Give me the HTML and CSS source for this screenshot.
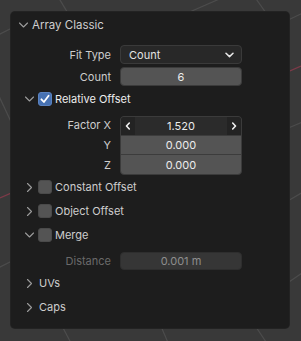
FILE: index.html
```html
<!DOCTYPE html>
<html>
<head>
<meta charset="utf-8">
<link rel="stylesheet" href="styles.css">
</head>
<body>
<svg class="viewport" width="301" height="341" viewBox="0 0 301 341">
  <g class="grid">
    <line x1="57" y1="-5" x2="75" y2="25"/>
    <line x1="185" y1="14" x2="240" y2="-10"/>
    <line x1="254" y1="-4" x2="271" y2="20"/>
    <line x1="284" y1="22" x2="305" y2="12"/>
    <line x1="-2" y1="35" x2="14" y2="27"/>
    <line x1="-2" y1="94" x2="13" y2="126"/>
    <line x1="286" y1="129" x2="305" y2="121"/>
    <line x1="286" y1="202" x2="305" y2="191"/>
    <line x1="286" y1="284" x2="305" y2="271"/>
    <line x1="-2" y1="268" x2="14" y2="260"/>
    <line x1="61" y1="324" x2="72" y2="345"/>
    <line x1="160" y1="324" x2="169" y2="345"/>
    <line x1="254" y1="324" x2="268" y2="345"/>
  </g>
  <line class="xaxis" x1="0" y1="198" x2="301" y2="66"/>
</svg>

<div class="panel">
  <div class="panel-header">
    <svg class="chev-down" width="11" height="8" viewBox="0 0 11 8"><polyline points="1.5,2 5.5,6 9.5,2"/></svg>
    <span class="title">Array Classic</span>
  </div>

  <div class="prop first">
    <span class="lbl">Fit Type</span>
    <div class="dropdown">
      <span>Count</span>
      <svg class="dd-arrow" width="9" height="6" viewBox="0 0 9 6"><polyline points="1,1.2 4.5,4.6 8,1.2"/></svg>
    </div>
  </div>

  <div class="prop">
    <span class="lbl">Count</span>
    <div class="num">6</div>
  </div>

  <div class="sub rel">
    <span class="chev-slot"><svg class="chev-down" width="11" height="8" viewBox="0 0 11 8"><polyline points="1.5,2 5.5,6 9.5,2"/></svg></span>
    <span class="check on"><svg width="14" height="14" viewBox="0 0 14 14"><polyline points="3.4,7.3 5.9,10 10.6,3.8"/></svg></span>
    <span class="sub-title bright">Relative Offset</span>
  </div>

  <div class="vec">
    <div class="vlabels">
      <span class="vl x">Factor X</span>
      <span class="vl">Y</span>
      <span class="vl">Z</span>
    </div>
    <div class="vgroup">
      <div class="vrow xrow">
        <span class="arr"><svg width="6" height="8" viewBox="0 0 6 8"><polyline points="4.3,1 1.5,4 4.3,7"/></svg></span>
        <span class="val">1.520</span>
        <span class="arr"><svg width="6" height="8" viewBox="0 0 6 8"><polyline points="1.7,1 4.5,4 1.7,7"/></svg></span>
      </div>
      <div class="vrow light"><span class="val">0.000</span></div>
      <div class="vrow light"><span class="val">0.000</span></div>
    </div>
  </div>

  <div class="sub">
    <span class="chev-slot"><svg class="chev-right" width="8" height="11" viewBox="0 0 8 11"><polyline points="2.5,1.5 6.5,5.5 2.5,9.5"/></svg></span>
    <span class="check"></span>
    <span class="sub-title">Constant Offset</span>
  </div>

  <div class="sub">
    <span class="chev-slot"><svg class="chev-right" width="8" height="11" viewBox="0 0 8 11"><polyline points="2.5,1.5 6.5,5.5 2.5,9.5"/></svg></span>
    <span class="check"></span>
    <span class="sub-title">Object Offset</span>
  </div>

  <div class="sub">
    <span class="chev-slot"><svg class="chev-down" width="11" height="8" viewBox="0 0 11 8"><polyline points="1.5,2 5.5,6 9.5,2"/></svg></span>
    <span class="check"></span>
    <span class="sub-title">Merge</span>
  </div>

  <div class="prop dim">
    <span class="lbl">Distance</span>
    <div class="num dimfield">0.001 m</div>
  </div>

  <div class="sub plain first-plain">
    <span class="chev-slot"><svg class="chev-right" width="8" height="11" viewBox="0 0 8 11"><polyline points="2.5,1.5 6.5,5.5 2.5,9.5"/></svg></span>
    <span class="sub-title">UVs</span>
  </div>

  <div class="sub plain">
    <span class="chev-slot"><svg class="chev-right" width="8" height="11" viewBox="0 0 8 11"><polyline points="2.5,1.5 6.5,5.5 2.5,9.5"/></svg></span>
    <span class="sub-title">Caps</span>
  </div>
</div>
</body>
</html>
```

FILE: styles.css
```css
* { box-sizing: border-box; }

html, body {
  margin: 0;
  padding: 0;
}

body {
  width: 301px;
  height: 341px;
  overflow: hidden;
  background: #393939;
  font-family: "Inter", "Noto Sans", sans-serif;
  font-size: 11px;
  color: #d2d2d2;
  position: relative;
}

.viewport {
  position: absolute;
  left: 0;
  top: 0;
}

.viewport .grid line {
  stroke: #4c4c4c;
  stroke-width: 1.2;
}

.viewport .xaxis {
  stroke: #7d3a48;
  stroke-width: 1.3;
}

.panel {
  position: relative;
  margin: 12px 0 0 11px;
  width: 278px;
  height: 316px;
  background: #1d1d1d;
  border-radius: 4px;
  box-shadow: 0 0 0 1px #232323;
}

svg polyline {
  fill: none;
  stroke-linecap: round;
  stroke-linejoin: round;
}

.chev-down polyline,
.chev-right polyline {
  stroke: #9c9c9c;
  stroke-width: 1.1;
}

.panel-header {
  height: 26px;
  display: flex;
  align-items: center;
  padding-left: 7px;
  gap: 3px;
}

.panel-header .chev-down {
  display: block;
}

.title {
  color: #cfcfcf;
  font-size: 11.5px;
}

.prop {
  display: flex;
  align-items: center;
  height: 19px;
  margin-top: 3px;
}

.prop.first {
  margin-top: 7px;
}

.lbl {
  width: 100px;
  text-align: right;
  color: #cdcdcd;
}

.dropdown,
.num {
  margin-left: 9px;
  width: 122px;
  height: 19px;
  border-radius: 4px;
}

.dropdown {
  display: flex;
  align-items: center;
  justify-content: space-between;
  padding: 0 7px 0 8px;
  background: #282828;
  border: 1px solid #3a3a3a;
  color: #e4e4e4;
}

.dd-arrow polyline {
  stroke: #e8e8e8;
  stroke-width: 1.5;
}

.num {
  display: flex;
  align-items: center;
  justify-content: center;
  background: #545454;
  border: 1px solid #3b3b3b;
  color: #ececec;
}

.sub {
  display: flex;
  align-items: center;
  height: 24px;
  padding-left: 12px;
}

.sub.rel {
  height: 20px;
  margin-top: 3px;
}

.chev-slot {
  width: 12px;
  display: flex;
  justify-content: center;
  align-items: center;
}

.chev-slot svg {
  display: block;
}

.check {
  width: 14px;
  height: 14px;
  margin-left: 3px;
  border-radius: 3px;
  background: #545454;
  border: 1px solid #4a4a4a;
  display: flex;
}

.check.on {
  background: #4772b3;
  border-color: #5b83c0;
}

.check svg {
  display: block;
  margin: -1px;
}

.check polyline {
  stroke: #ffffff;
  stroke-width: 1.8;
}

.sub-title {
  margin-left: 3px;
  color: #cdcdcd;
}

.sub-title.bright {
  color: #ededed;
}

.sub.plain .sub-title {
  margin-left: 4px;
}

.vec {
  display: flex;
  margin-top: 7px;
  height: 59px;
}

.vlabels {
  width: 100px;
  display: flex;
  flex-direction: column;
}

.vl {
  height: 20px;
  line-height: 20px;
  text-align: right;
  color: #cdcdcd;
}

.vl.x {
  height: 19px;
  line-height: 19px;
}

.vgroup {
  margin-left: 9px;
  width: 122px;
  height: 59px;
  border-radius: 4px;
  overflow: hidden;
  border: 1px solid #3b3b3b;
  display: flex;
  flex-direction: column;
  background: #545454;
}

.vrow {
  height: 20px;
  display: flex;
  align-items: center;
  justify-content: center;
  color: #ececec;
}

.vrow.xrow {
  height: 18px;
  background: #2b2b2b;
  justify-content: space-between;
}

.vrow.light {
  border-top: 1px solid #3c3c3c;
}

.arr {
  width: 14px;
  height: 100%;
  background: #232323;
  display: flex;
  align-items: center;
  justify-content: center;
}

.arr svg {
  display: block;
}

.arr polyline {
  stroke: #f0f0f0;
  stroke-width: 1.6;
}

.prop.dim {
  margin-top: 5px;
  height: 18px;
}

.prop.dim .lbl {
  color: #6a6a6a;
}

.num.dimfield {
  height: 18px;
  background: #363636;
  border-color: #2e2e2e;
  color: #8e8e8e;
}

.sub.first-plain {
  margin-top: 1px;
}
```
